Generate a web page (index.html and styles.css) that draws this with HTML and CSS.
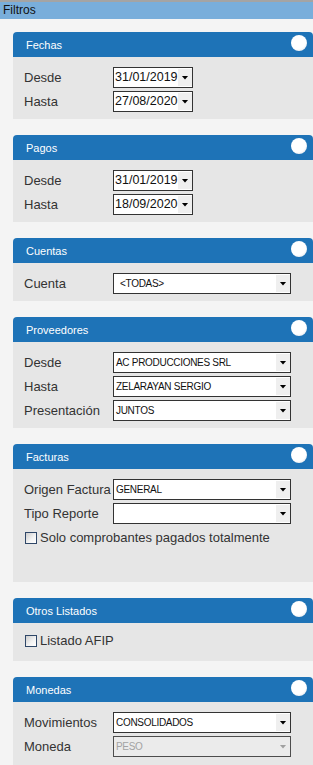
FILE: index.html
```html
<!DOCTYPE html>
<html lang="es">
<head>
<meta charset="utf-8">
<title>Filtros</title>
<link rel="stylesheet" href="styles.css">
</head>
<body>
<div class="topbar">Filtros</div>
<main class="content">
  <section class="panel">
    <header class="panel-head"><span class="panel-title">Fechas</span><span class="toggle"></span></header>
    <div class="panel-body">
      <div class="row"><span class="label">Desde</span><div class="field field-date"><span class="value">31/01/2019</span><span class="arrow"></span></div></div>
      <div class="row"><span class="label">Hasta</span><div class="field field-date"><span class="value">27/08/2020</span><span class="arrow"></span></div></div>
    </div>
  </section>

  <section class="panel">
    <header class="panel-head"><span class="panel-title">Pagos</span><span class="toggle"></span></header>
    <div class="panel-body">
      <div class="row"><span class="label">Desde</span><div class="field field-date"><span class="value">31/01/2019</span><span class="arrow"></span></div></div>
      <div class="row"><span class="label">Hasta</span><div class="field field-date"><span class="value">18/09/2020</span><span class="arrow"></span></div></div>
    </div>
  </section>

  <section class="panel">
    <header class="panel-head"><span class="panel-title">Cuentas</span><span class="toggle"></span></header>
    <div class="panel-body">
      <div class="row"><span class="label">Cuenta</span><div class="field field-select"><span class="value value-indent">&lt;TODAS&gt;</span><span class="arrow"></span></div></div>
    </div>
  </section>

  <section class="panel">
    <header class="panel-head"><span class="panel-title">Proveedores</span><span class="toggle"></span></header>
    <div class="panel-body">
      <div class="row"><span class="label">Desde</span><div class="field field-select"><span class="value">AC PRODUCCIONES SRL</span><span class="arrow"></span></div></div>
      <div class="row"><span class="label">Hasta</span><div class="field field-select"><span class="value">ZELARAYAN SERGIO</span><span class="arrow"></span></div></div>
      <div class="row"><span class="label">Presentación</span><div class="field field-select"><span class="value">JUNTOS</span><span class="arrow"></span></div></div>
    </div>
  </section>

  <section class="panel">
    <header class="panel-head"><span class="panel-title">Facturas</span><span class="toggle"></span></header>
    <div class="panel-body">
      <div class="row"><span class="label">Origen Factura</span><div class="field field-select"><span class="value">GENERAL</span><span class="arrow"></span></div></div>
      <div class="row"><span class="label">Tipo Reporte</span><div class="field field-select"><span class="value"></span><span class="arrow"></span></div></div>
      <div class="check-row"><span class="checkbox"></span><span class="check-label">Solo comprobantes pagados totalmente</span></div>
      <div class="spacer"></div>
    </div>
  </section>

  <section class="panel">
    <header class="panel-head"><span class="panel-title">Otros Listados</span><span class="toggle"></span></header>
    <div class="panel-body panel-body--compact">
      <div class="check-row"><span class="checkbox"></span><span class="check-label">Listado AFIP</span></div>
    </div>
  </section>

  <section class="panel">
    <header class="panel-head"><span class="panel-title">Monedas</span><span class="toggle"></span></header>
    <div class="panel-body panel-body--last">
      <div class="row"><span class="label">Movimientos</span><div class="field field-select"><span class="value">CONSOLIDADOS</span><span class="arrow"></span></div></div>
      <div class="row"><span class="label">Moneda</span><div class="field field-select field-disabled"><span class="value">PESO</span><span class="arrow"></span></div></div>
    </div>
  </section>
</main>
</body>
</html>
```

FILE: styles.css
```css
html, body {
  margin: 0;
  padding: 0;
}

body {
  background: #f4f4f4;
  font-family: "Liberation Sans", Arial, sans-serif;
  color: #333;
  overflow: hidden;
}

.topbar {
  height: 17px;
  line-height: 17px;
  border-top: 2px solid #a4a4a4;
  background: #79aedb;
  padding-left: 3px;
  font-size: 12px;
  color: #111;
}

.content {
  display: flex;
  flex-direction: column;
  gap: 16px;
  padding: 13px 0 0 13px;
}

.panel {
  width: 300px;
}

.panel-head {
  height: 25px;
  box-sizing: border-box;
  display: flex;
  align-items: center;
  justify-content: space-between;
  padding: 0 6px 0 13px;
  background: #1e73b7;
  border-radius: 4px 4px 0 0;
  color: #fff;
  font-size: 11px;
}

.toggle {
  align-self: flex-start;
  margin-top: 3px;
  width: 16px;
  height: 16px;
  border-radius: 50%;
  background: radial-gradient(circle at 42% 38%, #ffffff 58%, #eef0f3 74%, #c9ced6 100%);
}

.panel-body {
  display: flex;
  flex-direction: column;
  gap: 3px;
  padding: 10px 0 7px 11px;
  background: #e6e6e6;
}

.panel-body--compact {
  padding-top: 7px;
  padding-bottom: 10px;
}

.panel-body--last {
  padding-bottom: 8px;
}

.row {
  display: flex;
  align-items: center;
  height: 21px;
}

.label {
  flex: none;
  width: 89px;
  font-size: 13px;
  color: #333;
  white-space: nowrap;
}

.field {
  display: flex;
  height: 21px;
  box-sizing: border-box;
  border: 1px solid #333;
  background: #fff;
  color: #111;
}

.field-date {
  width: 80px;
}

.field-select {
  width: 178px;
}

.value {
  flex: 1;
  min-width: 0;
  line-height: 19px;
  white-space: nowrap;
  overflow: hidden;
}

.field-date .value {
  font-size: 12.5px;
  padding-left: 1px;
}

.field-select .value {
  font-size: 10px;
  letter-spacing: -0.3px;
  padding-left: 2px;
}

.field-select .value-indent {
  padding-left: 6px;
}

.arrow {
  flex: none;
  width: 14px;
  margin: 1px 0;
  background: #efefef;
  display: flex;
  align-items: center;
  justify-content: center;
}

.arrow::after {
  content: "";
  width: 7px;
  height: 4px;
  background: #000;
  clip-path: polygon(0 0, 100% 0, 50% 100%);
}

.field-disabled {
  background: #ebebeb;
  border-color: #4d4d4d;
}

.field-disabled .value {
  color: #a3a3a3;
}

.field-disabled .arrow {
  background: transparent;
}

.field-disabled .arrow::after {
  background: #a0a0a0;
}

.check-row {
  display: flex;
  align-items: center;
  height: 21px;
  font-size: 13px;
  color: #333;
}

.checkbox {
  flex: none;
  width: 12px;
  height: 12px;
  box-sizing: border-box;
  margin: 0 3px 0 1px;
  border: 1px solid #2f4768;
  background: linear-gradient(135deg, #cdcdcd 0%, #f4f4f4 60%, #ffffff 100%);
}

.spacer {
  height: 24px;
}
```
